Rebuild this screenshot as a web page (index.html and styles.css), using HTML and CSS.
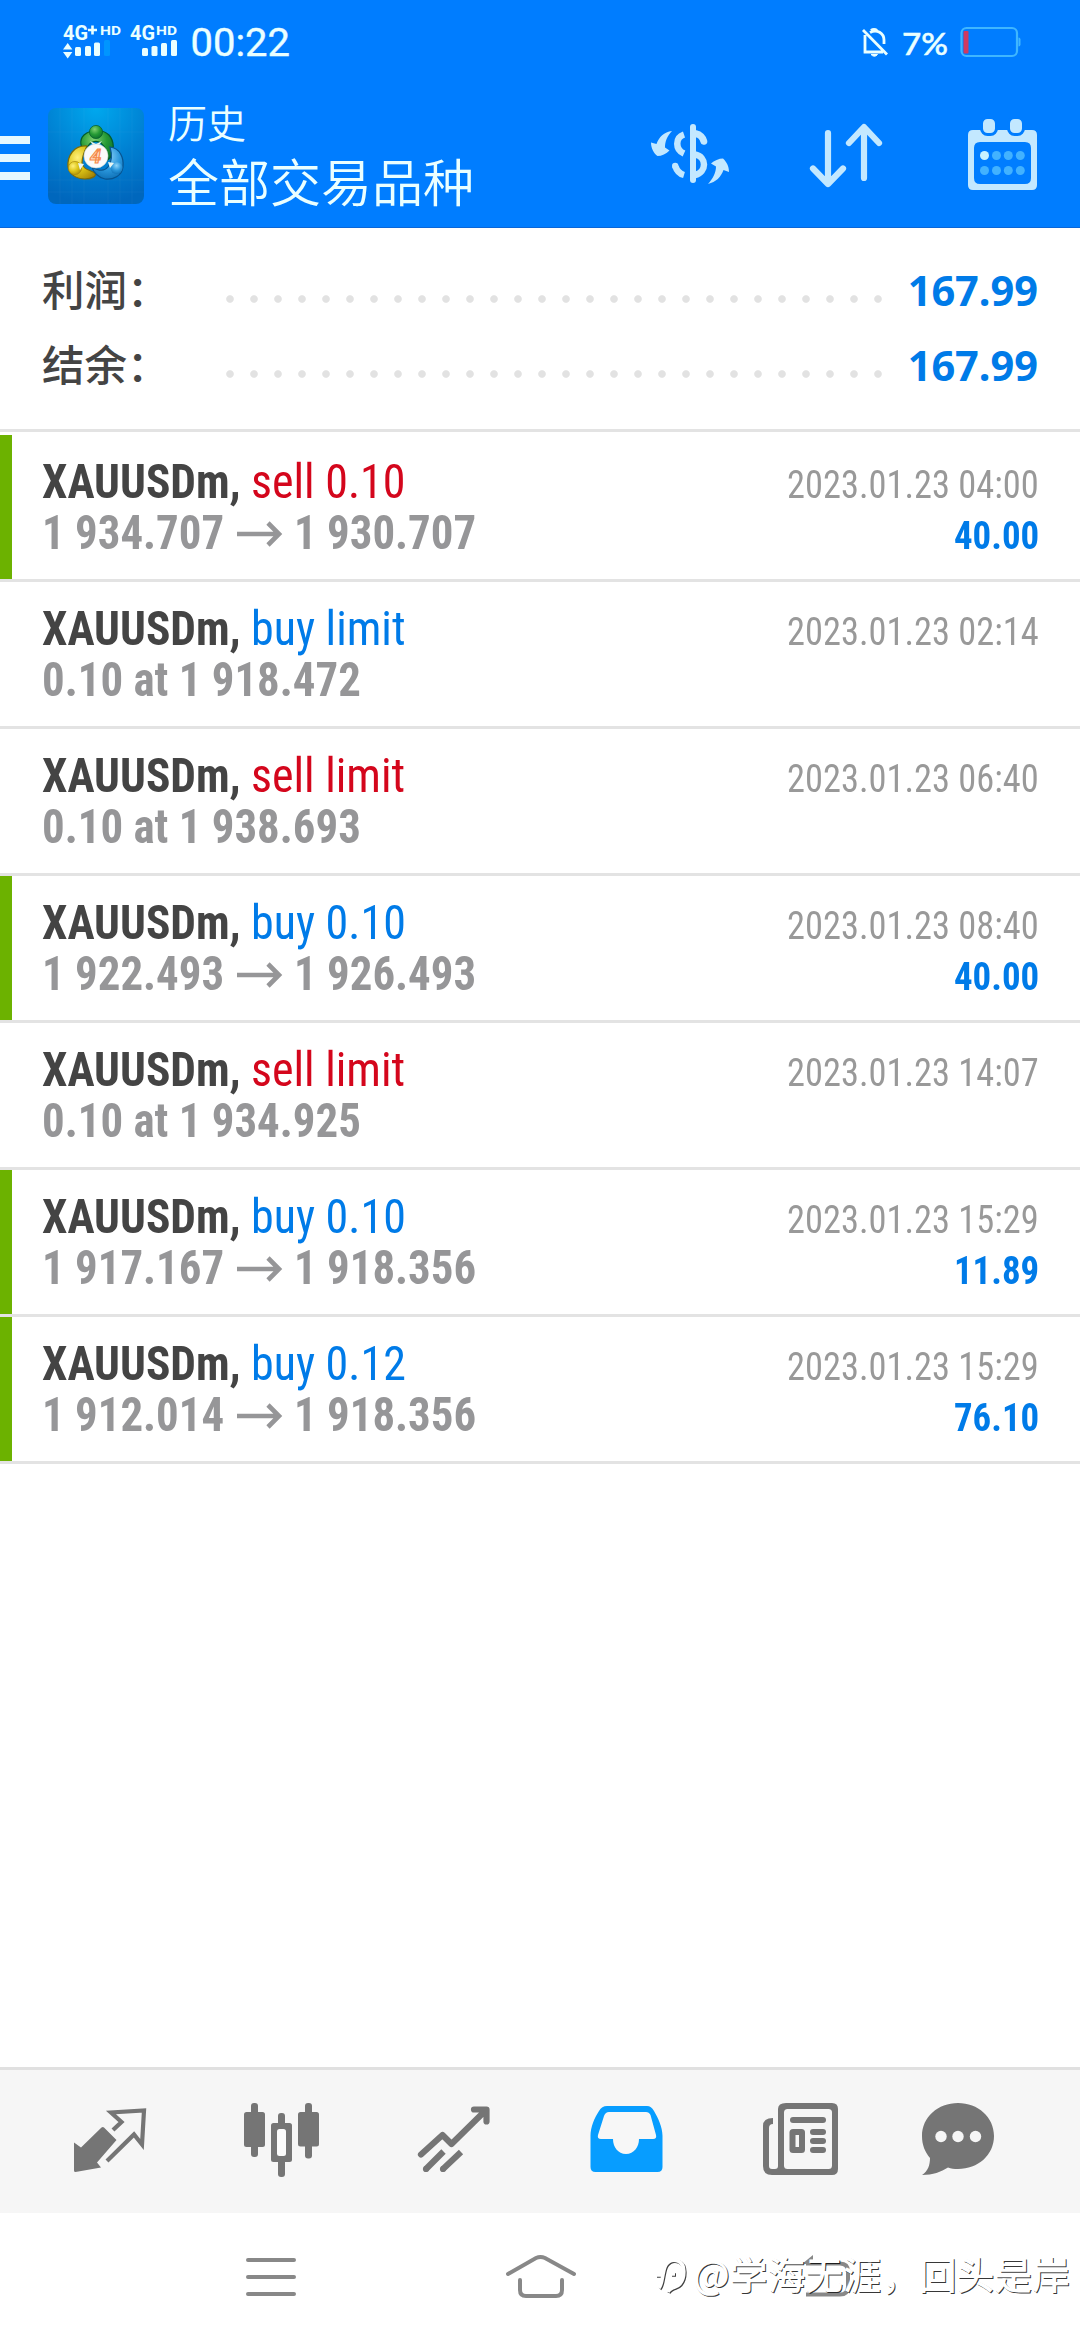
FILE: index.html
```html
<!DOCTYPE html>
<html lang="zh-CN">
<head>
<meta charset="utf-8">
<title>历史</title>
<link rel="stylesheet" href="styles.css">
</head>
<body>
<div class="screen">
  <header class="header">
    <div class="status">
      <svg class="status-left" viewBox="0 0 540 84" width="540" height="84">
        <g fill="#eaffff" font-family="Roboto, sans-serif" font-weight="700">
          <text x="63" y="40" font-size="21" textLength="25" lengthAdjust="spacingAndGlyphs">4G</text>
          <path d="M88 30h9M92.500 25.500v9" stroke="#eaffff" stroke-width="2.600"/>
          <text x="100" y="35" font-size="13" textLength="21" lengthAdjust="spacingAndGlyphs">HD</text>
          <text x="130" y="40" font-size="21" textLength="25" lengthAdjust="spacingAndGlyphs">4G</text>
          <text x="156" y="35" font-size="13" textLength="21" lengthAdjust="spacingAndGlyphs">HD</text>
          <path d="M63 49.500l4.700-6.500 4.700 6.500zM63 52l4.700 6.500 4.700-6.500z"/>
          <rect x="75" y="47" width="6" height="9" rx="1.500"/>
          <rect x="85" y="46" width="6" height="10" rx="1.500"/>
          <rect x="94" y="42.500" width="6" height="13.500" rx="1.500"/>
          <rect x="104" y="40" width="6" height="16" rx="1.500" fill="#0095ff"/>
          <rect x="142" y="48" width="6" height="8" rx="1.500"/>
          <rect x="151.500" y="46" width="6" height="10" rx="1.500"/>
          <rect x="161" y="43" width="6" height="13" rx="1.500"/>
          <rect x="171" y="40" width="6" height="16" rx="1.500"/>
        </g>
        <text x="190.500" y="56" font-family="Roboto, sans-serif" font-size="39.500" fill="#eaffff" stroke="#eaffff" stroke-width=".4" textLength="99.500" lengthAdjust="spacingAndGlyphs">00:22</text>
      </svg>
      <svg class="status-right" viewBox="540 0 540 84" width="540" height="84">
        <g fill="none" stroke="#eaffff" stroke-width="2.800">
          <path d="M865 35v17h18M870 32.500c7-4 14 1 14 7.500v4M863 30l24 24.500"/>
          <path d="M871 30.500q3-2 6 0" stroke-width="3"/>
          <path d="M871 54.500h6.500q-3 3.500-6.500 0z" fill="#eaffff" stroke-width="1"/>
        </g>
        <text x="902" y="54.500" font-family="Lato, sans-serif" font-weight="500" font-size="31" fill="#eaffff" stroke="#eaffff" stroke-width=".5" textLength="46" lengthAdjust="spacingAndGlyphs">7%</text>
        <rect x="961.500" y="28" width="55.500" height="28" rx="5" fill="none" stroke="#3fb6ff" stroke-width="2.200"/>
        <rect x="963.500" y="31" width="5" height="22.500" rx="1" fill="#d03a60"/>
        <path d="M1018.500 37.500q2 0 2 2v5q0 2-2 2z" fill="#3fb6ff"/>
      </svg>
    </div>
    <div class="toolbar">
      <div class="burger"><i></i><i></i><i></i></div>
      <svg class="app-icon" viewBox="0 0 96 96" width="96" height="96">
        <defs>
          <radialGradient id="bg" cx=".5" cy="0" r="1"><stop offset="0" stop-color="#00a8ee"/><stop offset=".55" stop-color="#0080d2"/><stop offset="1" stop-color="#0067bd"/></radialGradient>
          <radialGradient id="g" cx=".4" cy=".3" r=".8"><stop offset="0" stop-color="#7fd070"/><stop offset=".5" stop-color="#259a35"/><stop offset="1" stop-color="#05662a"/></radialGradient>
          <radialGradient id="y" cx=".35" cy=".35" r=".8"><stop offset="0" stop-color="#fff07a"/><stop offset=".5" stop-color="#dcc416"/><stop offset="1" stop-color="#a38206"/></radialGradient>
          <radialGradient id="b" cx=".5" cy=".3" r=".8"><stop offset="0" stop-color="#8ed4fa"/><stop offset=".5" stop-color="#2a97dc"/><stop offset="1" stop-color="#0867ad"/></radialGradient>
        </defs>
        <rect width="96" height="96" rx="8" fill="url(#bg)"/>
        <path d="M12 0v96M24 0v96M36 0v96M60 0v96M72 0v96M84 0v96M0 24h96M0 72h96M0 84h96" stroke="#fff" stroke-opacity=".03"/>
        <path d="M38 44c-6-4-7-12-2-17 7-6 19-6 25 0 5 6 6 15 1 23l-5 4c2-8 1-15-4-19-6-4-14 0-14 8z" fill="url(#g)" stroke="#045c2c" stroke-width="1.200"/>
        <path d="M39 38c-13-1-20 10-19 21 1 7 8 12 17 12 7 0 12-3 10-6-4-3-12-3-13-10 0-6 2-11 5-17z" fill="url(#y)" stroke="#7c6a08" stroke-width="1.200"/>
        <path d="M62 39c10 1 14 11 13 20-1 9-10 13-18 12-6-1-12-7-13-12 5 3 12 5 16 0 4-5 4-13 2-20z" fill="url(#b)" stroke="#07538f" stroke-width="1.200"/>
        <circle cx="48" cy="24" r="6.600" fill="url(#g)" stroke="#045c2c" stroke-width=".7"/>
        <circle cx="27" cy="60" r="6.600" fill="url(#y)" stroke="#a98a10" stroke-width=".7"/>
        <circle cx="68.500" cy="60" r="6" fill="url(#b)"/>
        <path d="M30 55l6 1-4 6zM60 54l6 1-4 5zM42 33l6 3 6-3-3 4h-6z" fill="#e9f6f2"/>
        <circle cx="48" cy="48" r="12" fill="#fafafa" stroke="#cfd8d4" stroke-width=".6"/>
        <text x="47.500" y="55" text-anchor="middle" font-family="Roboto, sans-serif" font-style="italic" font-weight="700" font-size="20" fill="#ffe3c8" stroke="#f58a4a" stroke-width="1.200">4</text>
      </svg>
      <div class="titles">
        <div class="subtitle">历史</div>
        <div class="title">全部交易品种</div>
      </div>
      <svg class="actions" viewBox="600 84 480 144" width="480" height="144">
        <g fill="none" stroke="#c3e8ff" stroke-linecap="round" stroke-linejoin="round">
          <path d="M693 127v53" stroke-width="6"/>
          <path d="M684 134.500c-9 3-9 15 0 19" stroke-width="6.500" stroke-linecap="butt"/>
          <path d="M696 133.800c4 .7 7 4 7.800 7.500" stroke-width="7"/>
          <path d="M695 154.500c12 2 12 18 0 20.500" stroke-width="6.500" stroke-linecap="butt"/>
          <path d="M675.500 166.500c1.500 5 5 7.500 8.500 8.500" stroke-width="6.500" stroke-linecap="butt"/>
          <path d="M828 133v50M813 168.500l15 15.500 15-15.500M864 178v-50M849 143l15-16 15 16" stroke-width="6.200"/>
        </g>
        <g fill="#c3e8ff">
          <circle cx="675.200" cy="166" r="3.200"/>
          <path d="M672 131c-8 1-13 6-15.500 13l-5.500-1.500c0 6 3 11 6.500 13.500 4 0 9-2 12-5.500l-4.500-3c0-6 2-11 7-16.500z"/>
          <path d="M708 184c8-2 13-7 15.500-14l5.500 2c0-6-2.500-10-6-13.500-4 0-9 2-12 5l5 3c0 6-3 12-8 17.500z"/>
          <path fill-rule="evenodd" d="M973 130h59q5 0 5 5v50q0 5-5 5h-59q-5 0-5-5v-50q0-5 5-5zM980 142q-6 0-6 6v30q0 6 6 6h45q6 0 6-6v-30q0-6-6-6z"/>
        </g>
        <g fill="#c3e8ff" stroke="#007dff" stroke-width="3">
          <rect x="981.500" y="117.500" width="15" height="17" rx="6"/>
          <rect x="1008.500" y="117.500" width="15" height="17" rx="6"/>
        </g>
        <g fill="#42b2ff">
          <circle cx="984.500" cy="155.500" r="4.500" fill="#c8f2ff"/><circle cx="996.500" cy="155.500" r="4.500"/><circle cx="1008.300" cy="155.500" r="4.500"/><circle cx="1020.300" cy="155.500" r="4.500"/>
          <circle cx="984.500" cy="170.500" r="4.500"/><circle cx="996.500" cy="170.500" r="4.500"/><circle cx="1008.300" cy="170.500" r="4.500"/><circle cx="1020.300" cy="170.500" r="4.500"/>
        </g>
      </svg>
    </div>
  </header>

  <section class="summary">
    <div class="sum-row"><span class="sum-label">利润：</span><span class="dots"></span><span class="sum-value">167.99</span></div>
    <div class="sum-row"><span class="sum-label">结余：</span><span class="dots"></span><span class="sum-value">167.99</span></div>
  </section>

  <main class="deals">
    <article class="deal closed">
      <div class="line"><span class="name">XAUUSDm,</span><span class="kind sell">sell 0.10</span><span class="date">2023.01.23 04:00</span></div>
      <div class="line"><span class="price open">1 934.707</span><svg class="arrow" viewBox="0 0 46 26"><path d="M0 13h42M31 2l11 11-11 11"/></svg><span class="price">1 930.707</span><span class="profit">40.00</span></div>
    </article>
    <article class="deal">
      <div class="line"><span class="name">XAUUSDm,</span><span class="kind buy">buy limit</span><span class="date">2023.01.23 02:14</span></div>
      <div class="line"><span class="price">0.10 at 1 918.472</span></div>
    </article>
    <article class="deal">
      <div class="line"><span class="name">XAUUSDm,</span><span class="kind sell">sell limit</span><span class="date">2023.01.23 06:40</span></div>
      <div class="line"><span class="price">0.10 at 1 938.693</span></div>
    </article>
    <article class="deal closed">
      <div class="line"><span class="name">XAUUSDm,</span><span class="kind buy">buy 0.10</span><span class="date">2023.01.23 08:40</span></div>
      <div class="line"><span class="price open">1 922.493</span><svg class="arrow" viewBox="0 0 46 26"><path d="M0 13h42M31 2l11 11-11 11"/></svg><span class="price">1 926.493</span><span class="profit">40.00</span></div>
    </article>
    <article class="deal">
      <div class="line"><span class="name">XAUUSDm,</span><span class="kind sell">sell limit</span><span class="date">2023.01.23 14:07</span></div>
      <div class="line"><span class="price">0.10 at 1 934.925</span></div>
    </article>
    <article class="deal closed">
      <div class="line"><span class="name">XAUUSDm,</span><span class="kind buy">buy 0.10</span><span class="date">2023.01.23 15:29</span></div>
      <div class="line"><span class="price open">1 917.167</span><svg class="arrow" viewBox="0 0 46 26"><path d="M0 13h42M31 2l11 11-11 11"/></svg><span class="price">1 918.356</span><span class="profit">11.89</span></div>
    </article>
    <article class="deal closed">
      <div class="line"><span class="name">XAUUSDm,</span><span class="kind buy">buy 0.12</span><span class="date">2023.01.23 15:29</span></div>
      <div class="line"><span class="price open">1 912.014</span><svg class="arrow" viewBox="0 0 46 26"><path d="M0 13h42M31 2l11 11-11 11"/></svg><span class="price">1 918.356</span><span class="profit">76.10</span></div>
    </article>
  </main>

  <nav class="tabs">
    <svg viewBox="0 2070 195 143">
      <path d="M104 2127.500l12.500 12.500-19.500 22.500 4 5-25.500 4.500q-1.500 0-1.500-1.500v-28l7 5 20.500-20q1.300-1 2.500 0z" fill="#757575"/>
      <path d="M113 2130l8.500-8-10.500-9.500 33-2-2 34-8-10-27 26.500" fill="none" stroke="#757575" stroke-width="4.200"/>
    </svg>
    <svg viewBox="195 2070 173 143">
      <g fill="#757575">
        <rect x="244" y="2112" width="21" height="35" rx="2.500"/><rect x="251" y="2103" width="7" height="54" rx="3"/>
        <rect x="298" y="2112" width="21" height="34.500" rx="2.500"/><rect x="305" y="2103" width="7" height="55.500" rx="3"/>
        <rect x="278" y="2113" width="7" height="64" rx="3"/><rect x="271" y="2123" width="21" height="39" rx="2.500"/>
      </g>
      <rect x="277" y="2129" width="9" height="27" rx="2.500" fill="#fbfbfb"/>
    </svg>
    <svg viewBox="368 2070 172 143">
      <path d="M421 2154.500l21.500-19.500 9 9 34-33.500M474 2109.500h12.500v12" fill="none" stroke="#757575" stroke-width="6.200" stroke-linecap="round" stroke-linejoin="round"/>
      <path d="M426 2169l17.500-17.500M443 2169l18-17" fill="none" stroke="#757575" stroke-width="6.200"/>
      <circle cx="426" cy="2169" r="3.100" fill="#757575"/><circle cx="443" cy="2169" r="3.100" fill="#757575"/>
    </svg>
    <svg viewBox="540 2070 173 143">
      <path d="M607 2106h40c3 0 5 1.500 7 5 4 7 8.500 16 8.500 25v31q0 5-5 5h-62q-5 0-5-5v-31c0-9 4-18 8.500-25 2-3.500 4.500-5 8-5z" fill="#079dff"/>
      <path d="M609 2112h37q3 0 4.500 3l5.500 20q1 4-3 4h-14c0 8-5 15-13 15s-13-7-13-15h-12q-4 0-3-4l6-19q1.500-4 5-4z" fill="#f7f7f7"/>
    </svg>
    <svg viewBox="713 2070 167 143">
      <path d="M786 2103h46q6 0 6 6v60q0 6-6 6h-60q-9 0-9-9v-40q0-8 10-8v6q-4 0-4 4v38q0 3 3 3h3q3 0 3-3v-57q0-6 8-6z" fill="#757575"/>
      <rect x="784" y="2109" width="48" height="60" rx="3.500" fill="#f6f6f6"/>
      <g fill="#757575"><rect x="790" y="2117" width="36" height="6" rx="3"/><rect x="789.500" y="2129" width="15.500" height="24" rx="3.500"/><rect x="810" y="2129" width="16" height="6" rx="3"/><rect x="810" y="2138" width="16" height="6" rx="3"/><rect x="810" y="2147" width="16" height="6" rx="3"/></g>
      <rect x="795.500" y="2135" width="3.500" height="12" fill="#f6f6f6"/>
    </svg>
    <svg viewBox="880 2070 200 143">
      <path d="M958 2103c20 0 36 14 36 33s-16 33-36 33c-4 0-7-.3-10-1.500-7 4.500-15 7.500-26 7.500 6-4 8-10 8-17-5-6-8-13-8-22 0-19 16-33 36-33z" fill="#757575"/>
      <circle cx="941" cy="2136.500" r="5.700" fill="#f6f6f6"/><circle cx="958" cy="2136.500" r="5.700" fill="#f6f6f6"/><circle cx="975.500" cy="2136.500" r="5.700" fill="#f6f6f6"/>
    </svg>
  </nav>

  <footer class="system">
    <svg viewBox="0 2213 1080 127" width="1080" height="127">
      <g fill="none" stroke="#888" stroke-width="4" stroke-linecap="round">
        <path d="M248 2260h46M248 2277h46M248 2294h46"/>
        <path d="M508 2274l28-16q4.500-2 9 0l29 16M520 2280v10q0 6 6 6h30q6 0 6-6v-10"/>
        <path d="M806 2263.500h34q8 0 8 8v15q0 8-8 8h-34" stroke-linecap="butt"/>
      </g>
      <path d="M802 2264l11-9v9z" fill="#888"/>
    </svg>
    <div class="watermark">
      <svg viewBox="0 0 34 48" width="34" height="48"><path d="M4 39c3-3 3-10 5-18 2-9 8-11 14-9 8 3 7 17 2 23-3 4-9 2-12 8M1 26h8M16 25h4" fill="none" stroke="#fff" stroke-width="3.500"/></svg>
      <span>@学海无涯，回头是岸</span>
    </div>
  </footer>
</div>
</body>
</html>
```
FILE: styles.css
```css
* { box-sizing: border-box; margin: 0; padding: 0; }
body { width: 1080px; background: #fff; font-family: Roboto, "Noto Sans CJK SC", sans-serif; }
svg { display: block; flex: none; }

.screen { display: flex; flex-direction: column; width: 1080px; height: 2340px; overflow: hidden; background: #fff; }

.header { height: 228px; background: #007dff; border-bottom: 1px solid #0a66d8; }
.status { display: flex; height: 84px; }
.toolbar { display: flex; height: 144px; }
.burger { display: flex; flex-direction: column; gap: 10px; width: 30px; padding-top: 52px; }
.burger i { height: 8px; background: #e6f8ff; }
.app-icon { margin: 24px 0 0 18px; }
.titles { display: flex; flex-direction: column; gap: 6px; width: 456px; padding: 14px 0 0 24px; color: #eaffff; font-family: "Noto Sans CJK SC", sans-serif; font-weight: 350; white-space: nowrap; }
.subtitle { font-size: 39px; line-height: 46px; }
.title { font-size: 51px; line-height: 60px; }

.summary { height: 204px; padding: 22px 42px 0; border-bottom: 3px solid #e3e3e3; }
.sum-row { display: flex; align-items: baseline; height: 75px; line-height: 75px; }
.sum-label { width: 176px; color: #444; font: 500 42.5px/75px "Noto Sans CJK SC", sans-serif; }
.dots { align-self: stretch; width: 672px; background: radial-gradient(circle at 12px 49px, #e2e2e2 3.3px, transparent 4.3px) 0 0 / 24px 75px repeat-x; }
.sum-value { margin-left: auto; color: #007be8; font: 700 41.5px/75px "Noto Sans", sans-serif; }

.deals { display: flex; flex-direction: column; flex: 1; padding-top: 3px; }
.deal { height: 147px; padding: 21px 41px 0 30px; border-bottom: 3px solid #e3e3e3; display: flex; flex-direction: column; }
.deal::before { content: ""; width: 12px; height: 144px; margin: -21px 0 -123px -30px; flex: none; }
.closed::before { background: #6cb200; }
.line { display: flex; align-items: baseline; height: 51px; padding-left: 12px; font: 48px/51px "Roboto Condensed", Roboto, sans-serif; font-stretch: 75%; white-space: nowrap; }
.name { width: 209px; color: #444; font-weight: 700; transform: scaleX(.945); transform-origin: left; }
.kind { transform: scaleX(.958); transform-origin: left; }
.sell { color: #d4061c; }
.buy { color: #007be8; }
.price { color: #969698; font-weight: 700; transform: scaleX(.935); transform-origin: left; }
.open { width: 195px; }
.arrow { align-self: center; width: 46px; height: 26px; margin: 2px 11px 0 0; fill: none; stroke: #969698; stroke-width: 4.6; }
.date { margin-left: auto; color: #999; font-size: 39px; transform: scaleX(.933); transform-origin: right; }
.profit { margin-left: auto; color: #007be8; font-size: 39px; font-weight: 700; transform: scaleX(.945); transform-origin: right; }

.tabs { display: grid; grid-template-columns: 195px 173px 172px 173px 167px 200px; height: 146px; background: #f6f6f6; border-top: 3px solid #e0e0e0; }
.tabs svg { width: 100%; height: 143px; }

.system { position: relative; height: 127px; background: #fff; }
.watermark { position: absolute; left: 655px; top: 32px; display: flex; align-items: center; color: #fff; font: 500 37.8px/56px "Noto Sans CJK SC", sans-serif; white-space: nowrap; text-shadow: 1px 1px 0.5px rgba(0, 0, 0, .8); }
.watermark svg { width: 34px; margin-right: 4px; filter: drop-shadow(1px 1px .3px rgba(0, 0, 0, .75)); }
```
